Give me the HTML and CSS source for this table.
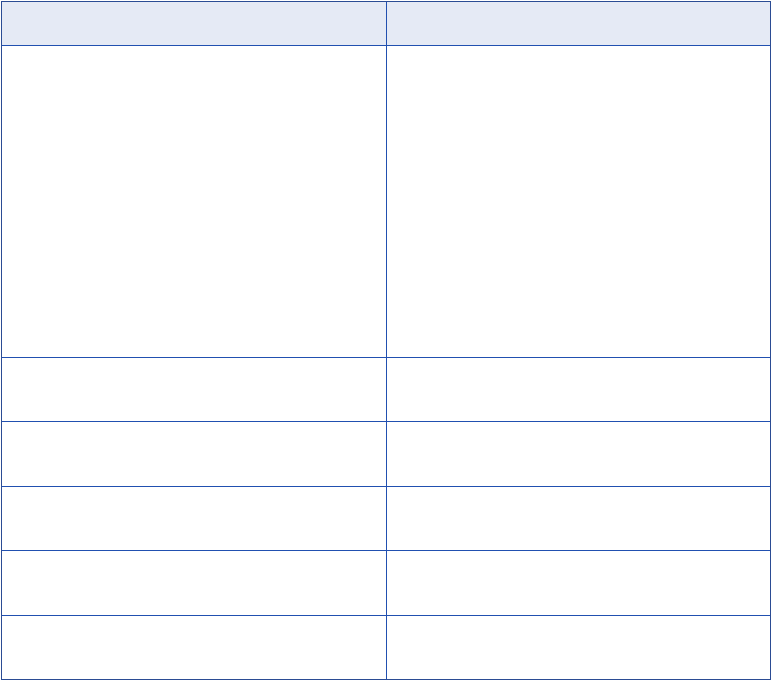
FILE: index.html
```html
<!DOCTYPE html>
<html>
<head>
<meta charset="utf-8">
<link rel="stylesheet" href="styles.css">
</head>
<body>
<div class="grid">
  <div class="cell head"></div><div class="cell head last"></div>
  <div class="cell tall"></div><div class="cell tall last"></div>
  <div class="cell r64"></div><div class="cell r64 last"></div>
  <div class="cell r65"></div><div class="cell r65 last"></div>
  <div class="cell r64"></div><div class="cell r64 last"></div>
  <div class="cell r65"></div><div class="cell r65 last"></div>
  <div class="cell r64 bottom"></div><div class="cell r64 last bottom"></div>
</div>
</body>
</html>
```
FILE: styles.css
```css
html, body {
  margin: 0;
  padding: 0;
  background: #ffffff;
  font-family: "Liberation Sans", Arial, sans-serif;
}
body {
  padding: 1px 0 0 1px;
}
.grid {
  display: grid;
  grid-template-columns: 385px 383px;
  width: 770px;
  box-sizing: border-box;
  border: 1px solid #2b4c94;
}
.cell {
  box-sizing: border-box;
  border-right: 1px solid #2150b0;
  border-bottom: 1px solid #2150b0;
}
.cell.last { border-right: none; }
.cell.bottom { border-bottom: none; }
.head { height: 44px; background: #e5eaf5; }
.tall { height: 312px; }
.r64 { height: 64px; }
.r65 { height: 65px; }
.bottom { height: 63px; }
```
